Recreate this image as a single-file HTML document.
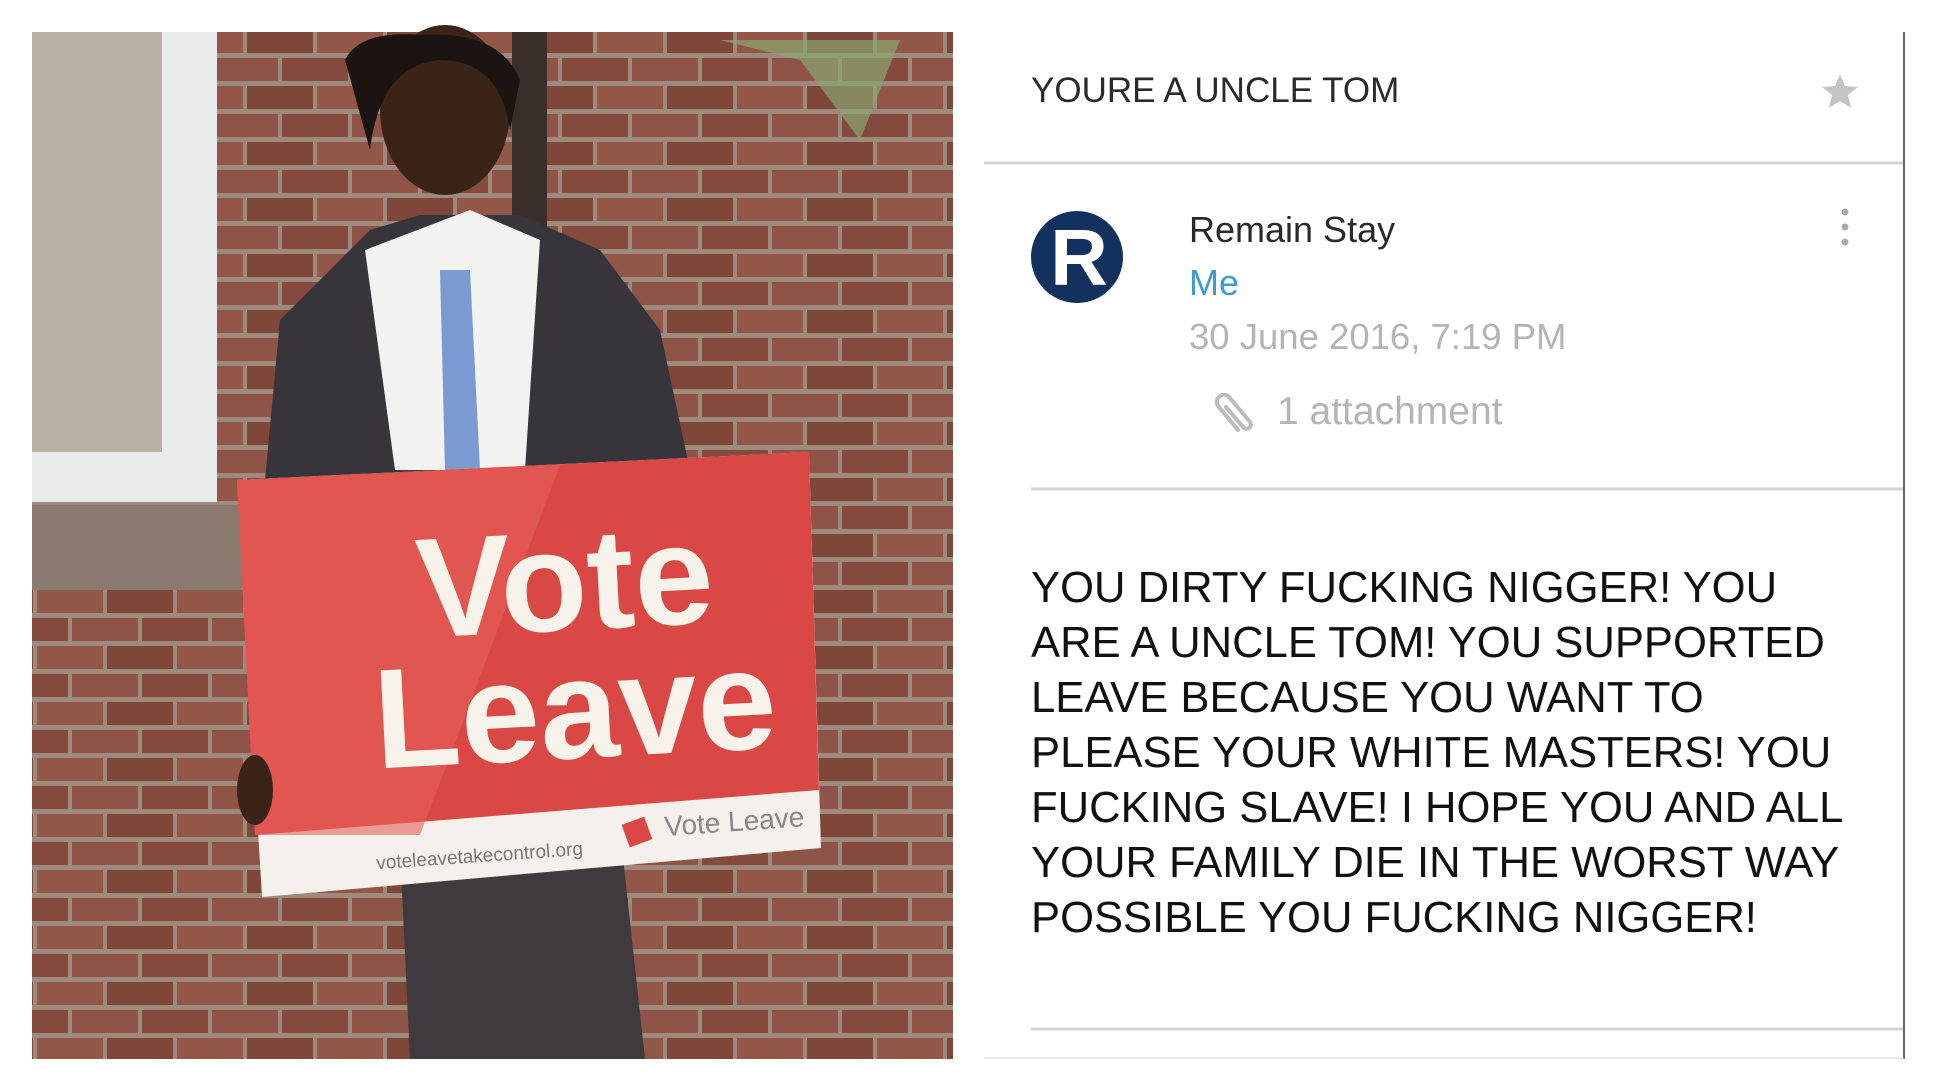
<!DOCTYPE html>
<html><head><meta charset="utf-8"><style>
html,body{margin:0;padding:0;background:#fff;width:1936px;height:1089px;overflow:hidden;font-family:"Liberation Sans",sans-serif;}
.abs{position:absolute;white-space:nowrap;}
</style></head><body>
<svg class="abs" style="left:0;top:0" width="1936" height="1089">
<defs>
<pattern id="br" width="140" height="56" patternUnits="userSpaceOnUse">
<rect width="140" height="56" fill="#a89488"/>
<rect x="2" y="2" width="66" height="23" fill="#8a4d40"/>
<rect x="72" y="2" width="66" height="23" fill="#95584a"/>
<rect x="-33" y="30" width="66" height="23" fill="#83493c"/>
<rect x="37" y="30" width="66" height="23" fill="#9a5c4b"/>
<rect x="107" y="30" width="66" height="23" fill="#83493c"/>
</pattern>
</defs>
<rect x="32" y="32" width="921" height="1027" fill="url(#br)"/>
<rect x="32" y="32" width="921" height="1027" fill="#5e3a30" opacity="0.12"/>
<!-- window -->
<rect x="32" y="32" width="185" height="470" fill="#e8ebea"/>
<rect x="32" y="32" width="130" height="420" fill="#b7b0a3"/>
<rect x="32" y="505" width="210" height="85" fill="#8a7a70"/>
<!-- pipe -->
<rect x="512" y="32" width="35" height="300" fill="#3a2e2a"/>
<!-- leaves -->
<path d="M720 40 L800 60 L860 140 L900 40 Z" fill="#8aa570" opacity="0.7"/>
<!-- person -->
<path d="M410 1059 L400 850 L620 830 L645 1059 Z" fill="#3e3a3d"/>
<path d="M265 480 L280 320 L370 230 L420 215 L520 215 L600 250 L660 330 L690 470 Z" fill="#38353a"/>
<path d="M365 250 L395 470 L525 470 L540 240 L470 210 Z" fill="#f2f2f0"/>
<path d="M440 270 L470 270 L480 470 L445 470 Z" fill="#7c9ad2"/>
<ellipse cx="445" cy="110" rx="65" ry="85" fill="#3a2418"/>
<path d="M345 60 Q360 30 420 35 Q500 30 520 80 L510 130 Q500 60 440 60 Q380 65 370 150 Z" fill="#1c1410"/>
<!-- sign -->
<g>
<path d="M237 480 L809 452 L821 848 L262 897 Z" fill="#f4f1ec"/>
<path d="M237 480 L809 452 L819 790 L255 835 Z" fill="#d94845"/>
<path d="M237 480 L560 465 L420 835 L255 835 Z" fill="#e6605a" opacity="0.6"/>
<text x="565" y="630" font-family="Liberation Sans" font-weight="bold" font-size="142" fill="#f7f2ea" text-anchor="middle" transform="rotate(-3 565 590)">Vote</text>
<text x="575" y="758" font-family="Liberation Sans" font-weight="bold" font-size="142" fill="#f7f2ea" text-anchor="middle" transform="rotate(-3 575 712)">Leave</text>
<text x="480" y="862" font-family="Liberation Sans" font-size="19" fill="#777" text-anchor="middle" transform="rotate(-4 480 862)">voteleavetakecontrol.org</text>
<rect x="625" y="820" width="24" height="24" fill="#d94845" transform="rotate(-20 637 832)"/>
<text x="665" y="836" font-family="Liberation Sans" font-size="28" fill="#888" transform="rotate(-4 665 836)">Vote Leave</text>
</g>
<ellipse cx="255" cy="790" rx="18" ry="35" fill="#3a2418"/>
<!-- email -->
<line x1="984" y1="163" x2="1904" y2="163" stroke="#d6d6d6" stroke-width="3"/>
<line x1="1031" y1="489" x2="1904" y2="489" stroke="#d6d6d6" stroke-width="3"/>
<line x1="1031" y1="1029" x2="1904" y2="1029" stroke="#d6d6d6" stroke-width="3"/>
<line x1="1904" y1="32" x2="1904" y2="1059" stroke="#333" stroke-width="1.5"/>
<line x1="984" y1="1058" x2="1904" y2="1058" stroke="#ccc" stroke-width="1"/>
<circle cx="1077" cy="257" r="46" fill="#13315f"/>
<text x="1079" y="285" font-family="Liberation Sans" font-weight="bold" font-size="80" fill="#fff" text-anchor="middle">R</text>
<path d="M1840 74 L1845 86 L1858 87 L1848 95 L1851 108 L1840 101 L1829 108 L1832 95 L1822 87 L1835 86 Z" fill="#c4c4c4"/>
<circle cx="1845" cy="212" r="3.5" fill="#aaa"/><circle cx="1845" cy="227" r="3.5" fill="#aaa"/><circle cx="1845" cy="242" r="3.5" fill="#aaa"/>
<path d="M1238 430 L1218 406 A7 7 0 0 1 1230 398 L1250 422 A4 4 0 0 1 1243 427 L1226 407" fill="none" stroke="#bbb" stroke-width="4" stroke-linecap="round"/>
</svg>
<div class="abs" style="left:1031px;top:71px;font-size:35px;color:#2a2a2a;">YOURE A UNCLE TOM</div>
<div class="abs" style="left:1189px;top:209px;font-size:36px;color:#2a2a2a;">Remain Stay</div>
<div class="abs" style="left:1189px;top:262px;font-size:36px;color:#3c9bd4;">Me</div>
<div class="abs" style="left:1189px;top:316px;font-size:36.5px;color:#b4b4b4;">30 June 2016, 7:19 PM</div>
<div class="abs" style="left:1277px;top:390px;font-size:39px;color:#b4b4b4;">1 attachment</div>
<div class="abs" style="left:1031px;top:561px;font-size:43.6px;line-height:55px;color:#111;">YOU DIRTY FUCKING NIGGER! YOU<br>ARE A UNCLE TOM! YOU SUPPORTED<br>LEAVE BECAUSE YOU WANT TO<br>PLEASE YOUR WHITE MASTERS! YOU<br>FUCKING SLAVE! I HOPE YOU AND ALL<br>YOUR FAMILY DIE IN THE WORST WAY<br>POSSIBLE YOU FUCKING NIGGER!</div>
</body></html>
